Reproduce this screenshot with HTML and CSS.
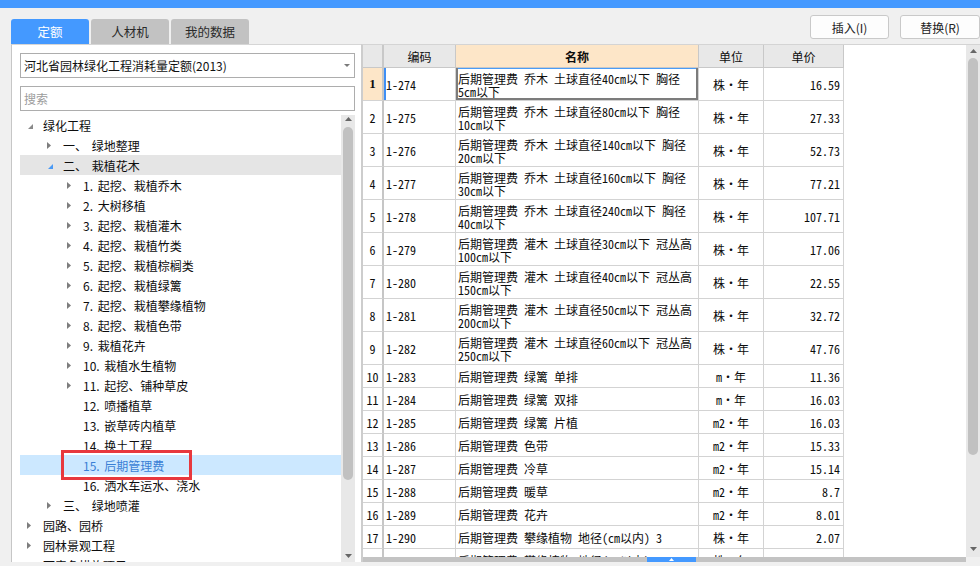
FILE: index.html
```html
<!DOCTYPE html>
<html lang="zh-CN">
<head>
<meta charset="utf-8">
<title>定额</title>
<link rel="stylesheet" href="styles.css">
</head>
<body>
<div class="topbar"></div>
<div class="toolbar">
  <div class="tabs">
    <div class="tab active">定额</div>
    <div class="tab">人材机</div>
    <div class="tab">我的数据</div>
  </div>
  <div class="actions">
    <button class="btn">插入(I)</button>
    <button class="btn wide">替换(R)</button>
  </div>
</div>
<div class="main">
  <div class="left">
    <div class="select"><span>河北省园林绿化工程消耗量定额(2013)</span><svg class="caret" width="6" height="3" viewBox="0 0 6 3"><path d="M0 0H6L3 3Z"/></svg></div>
    <div class="search">搜索</div>
    <div class="tree-wrap">
      <div class="tree">
        <div class="node"><span class="tg"><svg class="ex" width="5" height="5" viewBox="0 0 5 5"><path d="M5 0V5H0Z"/></svg></span>绿化工程</div>
        <div class="node l1"><span class="tg"><svg class="tri" width="4" height="7" viewBox="0 0 4 7"><path d="M0 0L4 3.5L0 7Z"/></svg></span>一、 绿地整理</div>
        <div class="node l1 hl"><span class="tg"><svg class="ex blue" width="5" height="5" viewBox="0 0 5 5"><path d="M5 0V5H0Z"/></svg></span>二、 栽植花木</div>
        <div class="node l2"><span class="tg"><svg class="tri" width="4" height="7" viewBox="0 0 4 7"><path d="M0 0L4 3.5L0 7Z"/></svg></span>1. 起挖、栽植乔木</div>
        <div class="node l2"><span class="tg"><svg class="tri" width="4" height="7" viewBox="0 0 4 7"><path d="M0 0L4 3.5L0 7Z"/></svg></span>2. 大树移植</div>
        <div class="node l2"><span class="tg"><svg class="tri" width="4" height="7" viewBox="0 0 4 7"><path d="M0 0L4 3.5L0 7Z"/></svg></span>3. 起挖、栽植灌木</div>
        <div class="node l2"><span class="tg"><svg class="tri" width="4" height="7" viewBox="0 0 4 7"><path d="M0 0L4 3.5L0 7Z"/></svg></span>4. 起挖、栽植竹类</div>
        <div class="node l2"><span class="tg"><svg class="tri" width="4" height="7" viewBox="0 0 4 7"><path d="M0 0L4 3.5L0 7Z"/></svg></span>5. 起挖、栽植棕榈类</div>
        <div class="node l2"><span class="tg"><svg class="tri" width="4" height="7" viewBox="0 0 4 7"><path d="M0 0L4 3.5L0 7Z"/></svg></span>6. 起挖、栽植绿篱</div>
        <div class="node l2"><span class="tg"><svg class="tri" width="4" height="7" viewBox="0 0 4 7"><path d="M0 0L4 3.5L0 7Z"/></svg></span>7. 起挖、栽植攀缘植物</div>
        <div class="node l2"><span class="tg"><svg class="tri" width="4" height="7" viewBox="0 0 4 7"><path d="M0 0L4 3.5L0 7Z"/></svg></span>8. 起挖、栽植色带</div>
        <div class="node l2"><span class="tg"><svg class="tri" width="4" height="7" viewBox="0 0 4 7"><path d="M0 0L4 3.5L0 7Z"/></svg></span>9. 栽植花卉</div>
        <div class="node l2"><span class="tg"><svg class="tri" width="4" height="7" viewBox="0 0 4 7"><path d="M0 0L4 3.5L0 7Z"/></svg></span>10. 栽植水生植物</div>
        <div class="node l2"><span class="tg"><svg class="tri" width="4" height="7" viewBox="0 0 4 7"><path d="M0 0L4 3.5L0 7Z"/></svg></span>11. 起挖、铺种草皮</div>
        <div class="node l2"><span class="tg"></span>12. 喷播植草</div>
        <div class="node l2"><span class="tg"></span>13. 嵌草砖内植草</div>
        <div class="node l2"><span class="tg"></span>14. 换土工程</div>
        <div class="node l2 sel"><span class="tg"></span>15. 后期管理费<span class="mark"></span></div>
        <div class="node l2"><span class="tg"></span>16. 洒水车运水、浇水</div>
        <div class="node l1"><span class="tg"><svg class="tri" width="4" height="7" viewBox="0 0 4 7"><path d="M0 0L4 3.5L0 7Z"/></svg></span>三、 绿地喷灌</div>
        <div class="node"><span class="tg"><svg class="tri" width="4" height="7" viewBox="0 0 4 7"><path d="M0 0L4 3.5L0 7Z"/></svg></span>园路、园桥</div>
        <div class="node"><span class="tg"><svg class="tri" width="4" height="7" viewBox="0 0 4 7"><path d="M0 0L4 3.5L0 7Z"/></svg></span>园林景观工程</div>
        <div class="node"><span class="tg"><svg class="tri" width="4" height="7" viewBox="0 0 4 7"><path d="M0 0L4 3.5L0 7Z"/></svg></span>可竞争措施项目</div>
      </div>
      <div class="vs vs-tree">
        <svg class="up" width="7" height="4" viewBox="0 0 7 4"><path d="M3.5 0L7 4H0Z"/></svg>
        <div class="thumb"></div>
        <div class="gap"></div>
        <svg class="down" width="7" height="4" viewBox="0 0 7 4"><path d="M0 0H7L3.5 4Z"/></svg>
      </div>
    </div>
  </div>
  <div class="right">
    <div class="grid-area">
      <div class="grid">
        <div class="row head"><div class="c rn"></div><div class="c code">编码</div><div class="c name">名称</div><div class="c unit">单位</div><div class="c price">单价</div></div>
        <div class="row cur"><div class="c rn"><b>1</b></div><div class="c code">1-274</div><div class="c name"><span class="ln">后期管理费 乔木 土球直径40cm以下 胸径</span><span class="ln">5cm以下</span></div><div class="c unit">株・年</div><div class="c price">16.59</div></div>
        <div class="row"><div class="c rn">2</div><div class="c code">1-275</div><div class="c name"><span class="ln">后期管理费 乔木 土球直径80cm以下 胸径</span><span class="ln">10cm以下</span></div><div class="c unit">株・年</div><div class="c price">27.33</div></div>
        <div class="row"><div class="c rn">3</div><div class="c code">1-276</div><div class="c name"><span class="ln">后期管理费 乔木 土球直径140cm以下 胸径</span><span class="ln">20cm以下</span></div><div class="c unit">株・年</div><div class="c price">52.73</div></div>
        <div class="row"><div class="c rn">4</div><div class="c code">1-277</div><div class="c name"><span class="ln">后期管理费 乔木 土球直径160cm以下 胸径</span><span class="ln">30cm以下</span></div><div class="c unit">株・年</div><div class="c price">77.21</div></div>
        <div class="row"><div class="c rn">5</div><div class="c code">1-278</div><div class="c name"><span class="ln">后期管理费 乔木 土球直径240cm以下 胸径</span><span class="ln">40cm以下</span></div><div class="c unit">株・年</div><div class="c price">107.71</div></div>
        <div class="row"><div class="c rn">6</div><div class="c code">1-279</div><div class="c name"><span class="ln">后期管理费 灌木 土球直径30cm以下 冠丛高</span><span class="ln">100cm以下</span></div><div class="c unit">株・年</div><div class="c price">17.06</div></div>
        <div class="row"><div class="c rn">7</div><div class="c code">1-280</div><div class="c name"><span class="ln">后期管理费 灌木 土球直径40cm以下 冠丛高</span><span class="ln">150cm以下</span></div><div class="c unit">株・年</div><div class="c price">22.55</div></div>
        <div class="row"><div class="c rn">8</div><div class="c code">1-281</div><div class="c name"><span class="ln">后期管理费 灌木 土球直径50cm以下 冠丛高</span><span class="ln">200cm以下</span></div><div class="c unit">株・年</div><div class="c price">32.72</div></div>
        <div class="row"><div class="c rn">9</div><div class="c code">1-282</div><div class="c name"><span class="ln">后期管理费 灌木 土球直径60cm以下 冠丛高</span><span class="ln">250cm以下</span></div><div class="c unit">株・年</div><div class="c price">47.76</div></div>
        <div class="row s"><div class="c rn">10</div><div class="c code">1-283</div><div class="c name">后期管理费 绿篱 单排</div><div class="c unit">m・年</div><div class="c price">11.36</div></div>
        <div class="row s"><div class="c rn">11</div><div class="c code">1-284</div><div class="c name">后期管理费 绿篱 双排</div><div class="c unit">m・年</div><div class="c price">16.03</div></div>
        <div class="row s"><div class="c rn">12</div><div class="c code">1-285</div><div class="c name">后期管理费 绿篱 片植</div><div class="c unit">m2・年</div><div class="c price">16.03</div></div>
        <div class="row s"><div class="c rn">13</div><div class="c code">1-286</div><div class="c name">后期管理费 色带</div><div class="c unit">m2・年</div><div class="c price">15.33</div></div>
        <div class="row s"><div class="c rn">14</div><div class="c code">1-287</div><div class="c name">后期管理费 冷草</div><div class="c unit">m2・年</div><div class="c price">15.14</div></div>
        <div class="row s"><div class="c rn">15</div><div class="c code">1-288</div><div class="c name">后期管理费 暖草</div><div class="c unit">m2・年</div><div class="c price">8.7</div></div>
        <div class="row s"><div class="c rn">16</div><div class="c code">1-289</div><div class="c name">后期管理费 花卉</div><div class="c unit">m2・年</div><div class="c price">8.01</div></div>
        <div class="row s"><div class="c rn">17</div><div class="c code">1-290</div><div class="c name">后期管理费 攀缘植物 地径(cm以内) 3</div><div class="c unit">株・年</div><div class="c price">2.07</div></div>
        <div class="row s"><div class="c rn">18</div><div class="c code">1-291</div><div class="c name">后期管理费 攀缘植物 地径(cm以内) 5</div><div class="c unit">株・年</div><div class="c price">3.11</div></div>
      </div>
      <div class="vs vs-grid">
        <svg class="up" width="7" height="4" viewBox="0 0 7 4"><path d="M3.5 0L7 4H0Z"/></svg>
        <div class="thumb"></div>
        <div class="gap"></div>
        <svg class="down" width="7" height="4" viewBox="0 0 7 4"><path d="M0 0H7L3.5 4Z"/></svg>
      </div>
    </div>
    <div class="hbar">
      <div class="htrack"><div class="handle"><svg width="5" height="3" viewBox="0 0 5 3"><path d="M2.5 0L5 3H0Z"/></svg></div></div>
      <div class="corner"></div>
    </div>
  </div>
</div>
</body>
</html>
```

FILE: styles.css
```css
* { box-sizing: border-box; }
html, body { margin: 0; padding: 0; }
body {
  width: 980px;
  height: 566px;
  overflow: hidden;
  background: #f0f0f0;
  font-family: "Noto Sans CJK SC", "Noto Sans", sans-serif;
  font-size: 12px;
  color: #0d0d0d;
}
.topbar { height: 8px; background: #4499ff; }
.toolbar {
  height: 36px;
  display: flex;
  justify-content: space-between;
  padding-left: 11px;
}
.tabs { display: flex; gap: 2px; align-self: flex-end; }
.tab {
  width: 78px;
  height: 25px;
  display: flex;
  align-items: center;
  justify-content: center;
  background: #c2c2c2;
  color: #2a2a2a;
  border-radius: 3px 3px 0 0;
  font-size: 12.5px;
}
.tab.active { background: #4499ff; color: #fff; }
.actions { display: flex; gap: 11px; margin-top: 7px; }
.btn {
  width: 79px;
  height: 24px;
  border: 1px solid #c9c9c9;
  border-radius: 3px;
  background: #fdfdfd;
  font: inherit;
  color: #222;
  padding: 0;
}
.btn.wide { width: 80px; }

.main { height: 518px; display: flex; }
.left {
  margin-left: 11px;
  width: 350px;
  flex: none;
  background: #fff;
  border-left: 1px solid #c6c6c6;
  border-top: 1px solid #d6d6d6;
  padding: 8px 6px 0 8px;
  display: flex;
  flex-direction: column;
}
.select {
  height: 25px;
  flex: none;
  border: 1px solid #adadad;
  display: flex;
  align-items: center;
  justify-content: space-between;
  padding: 0 4px 0 3px;
  color: #111;
}
.caret path { fill: #7a7a7a; }
.search {
  margin-top: 8px;
  height: 25px;
  flex: none;
  border: 1px solid #adadad;
  padding-left: 3px;
  display: flex;
  align-items: center;
  color: #9c9c9c;
}
.tree-wrap { margin-top: 4px; flex: 1; display: flex; min-height: 0; }
.tree { flex: 1; overflow: hidden; }
.node {
  height: 20px;
  display: flex;
  align-items: center;
  position: relative;
  white-space: nowrap;
  word-spacing: 2px;
}
.node.l1 { padding-left: 20px; }
.node.l2 { padding-left: 40px; }
.tg { width: 23px; height: 20px; flex: none; display: flex; align-items: center; }
.tg .tri { margin-left: 7px; }
.tg .ex { margin-left: 8px; margin-top: 2px; }
.tri path { fill: #7d7d7d; }
.ex path { fill: #8a8a8a; }
.ex.blue path { fill: #4a9af5; }
.node.hl { background: #e5e5e5; }
.node.sel { background: #cce8ff; color: #3a7fd5; }
.mark {
  position: absolute;
  left: 41px;
  top: -5px;
  width: 131px;
  height: 30px;
  border: 3px solid #e8383d;
}

.vs {
  width: 14px;
  flex: none;
  background: #e8e8e8;
  display: flex;
  flex-direction: column;
  align-items: center;
}
.vs path { fill: #666; }
.vs .thumb { width: 10px; border-radius: 5px; background: #c1c1c1; }
.vs .gap { flex: 1; }
.vs-tree .up { margin-top: 2px; }
.vs-tree .thumb { margin-top: 6px; height: 353px; }
.vs-tree .down { margin-bottom: 4px; }
.vs-grid .up { margin-top: 4px; }
.vs-grid .thumb { margin-top: 5px; height: 397px; }
.vs-grid .down { margin-bottom: 6px; }

.right {
  flex: 1;
  display: flex;
  flex-direction: column;
  border-left: 2px solid #cdcdcd;
  border-top: 1px solid #d4d4d4;
}
.grid-area { height: 512px; display: flex; background: #fff; }
.grid {
  flex: 1;
  overflow: hidden;
  font-family: "Noto Sans Mono CJK SC", "Noto Sans CJK SC", monospace;
  font-size: 12px;
  color: #0d0d0d;
}
.row { display: flex; height: 33px; }
.row.s, .row.head { height: 23px; }
.c {
  flex: none;
  border-right: 1px solid #d3d3d3;
  border-bottom: 1px solid #d3d3d3;
  display: flex;
  align-items: center;
  overflow: hidden;
  white-space: nowrap;
}
.rn { width: 21px; border-right: 2px solid #c6c6c6; justify-content: center; }
.rn b { font-family: "Liberation Serif", serif; font-size: 13px; }
.code { width: 72px; padding-left: 2px; }
.name {
  width: 243px;
  flex-direction: column;
  align-items: flex-start;
  justify-content: flex-start;
  padding: 4px 0 0 2px;
}
.ln { display: block; height: 13px; line-height: 13px; font-size: 12px; }
.row.s .name { flex-direction: row; align-items: center; padding-top: 0; }
.unit { width: 65px; justify-content: center; }
.price { width: 80px; justify-content: flex-end; padding-right: 3px; }
.head .c { background: #e8e8e8; justify-content: center; border-bottom-color: #c8c8c8; border-right-color: #c8c8c8; padding: 0; }
.head .name { background: #fde6c8; font-weight: bold; flex-direction: row; align-items: center; justify-content: center; }
.cur .rn { background: #fde6c8; }
.cur .code { box-shadow: inset 2px 0 0 #3f8ff5; }
.cur .name {
  box-shadow: inset 2px 0 0 #7c7c7c, inset -2px 0 0 #7c7c7c, inset 0 -2px 0 #7c7c7c, inset 0 1px 0 #4a9cf6;
}

.hbar { height: 5px; display: flex; }
.htrack { flex: 1; background: #c3c3c3; display: flex; padding-left: 284px; }
.handle {
  width: 49px;
  background: #4499ff;
  display: flex;
  justify-content: center;
  align-items: center;
}
.handle path { fill: #fff; }
.corner { width: 14px; }
```
